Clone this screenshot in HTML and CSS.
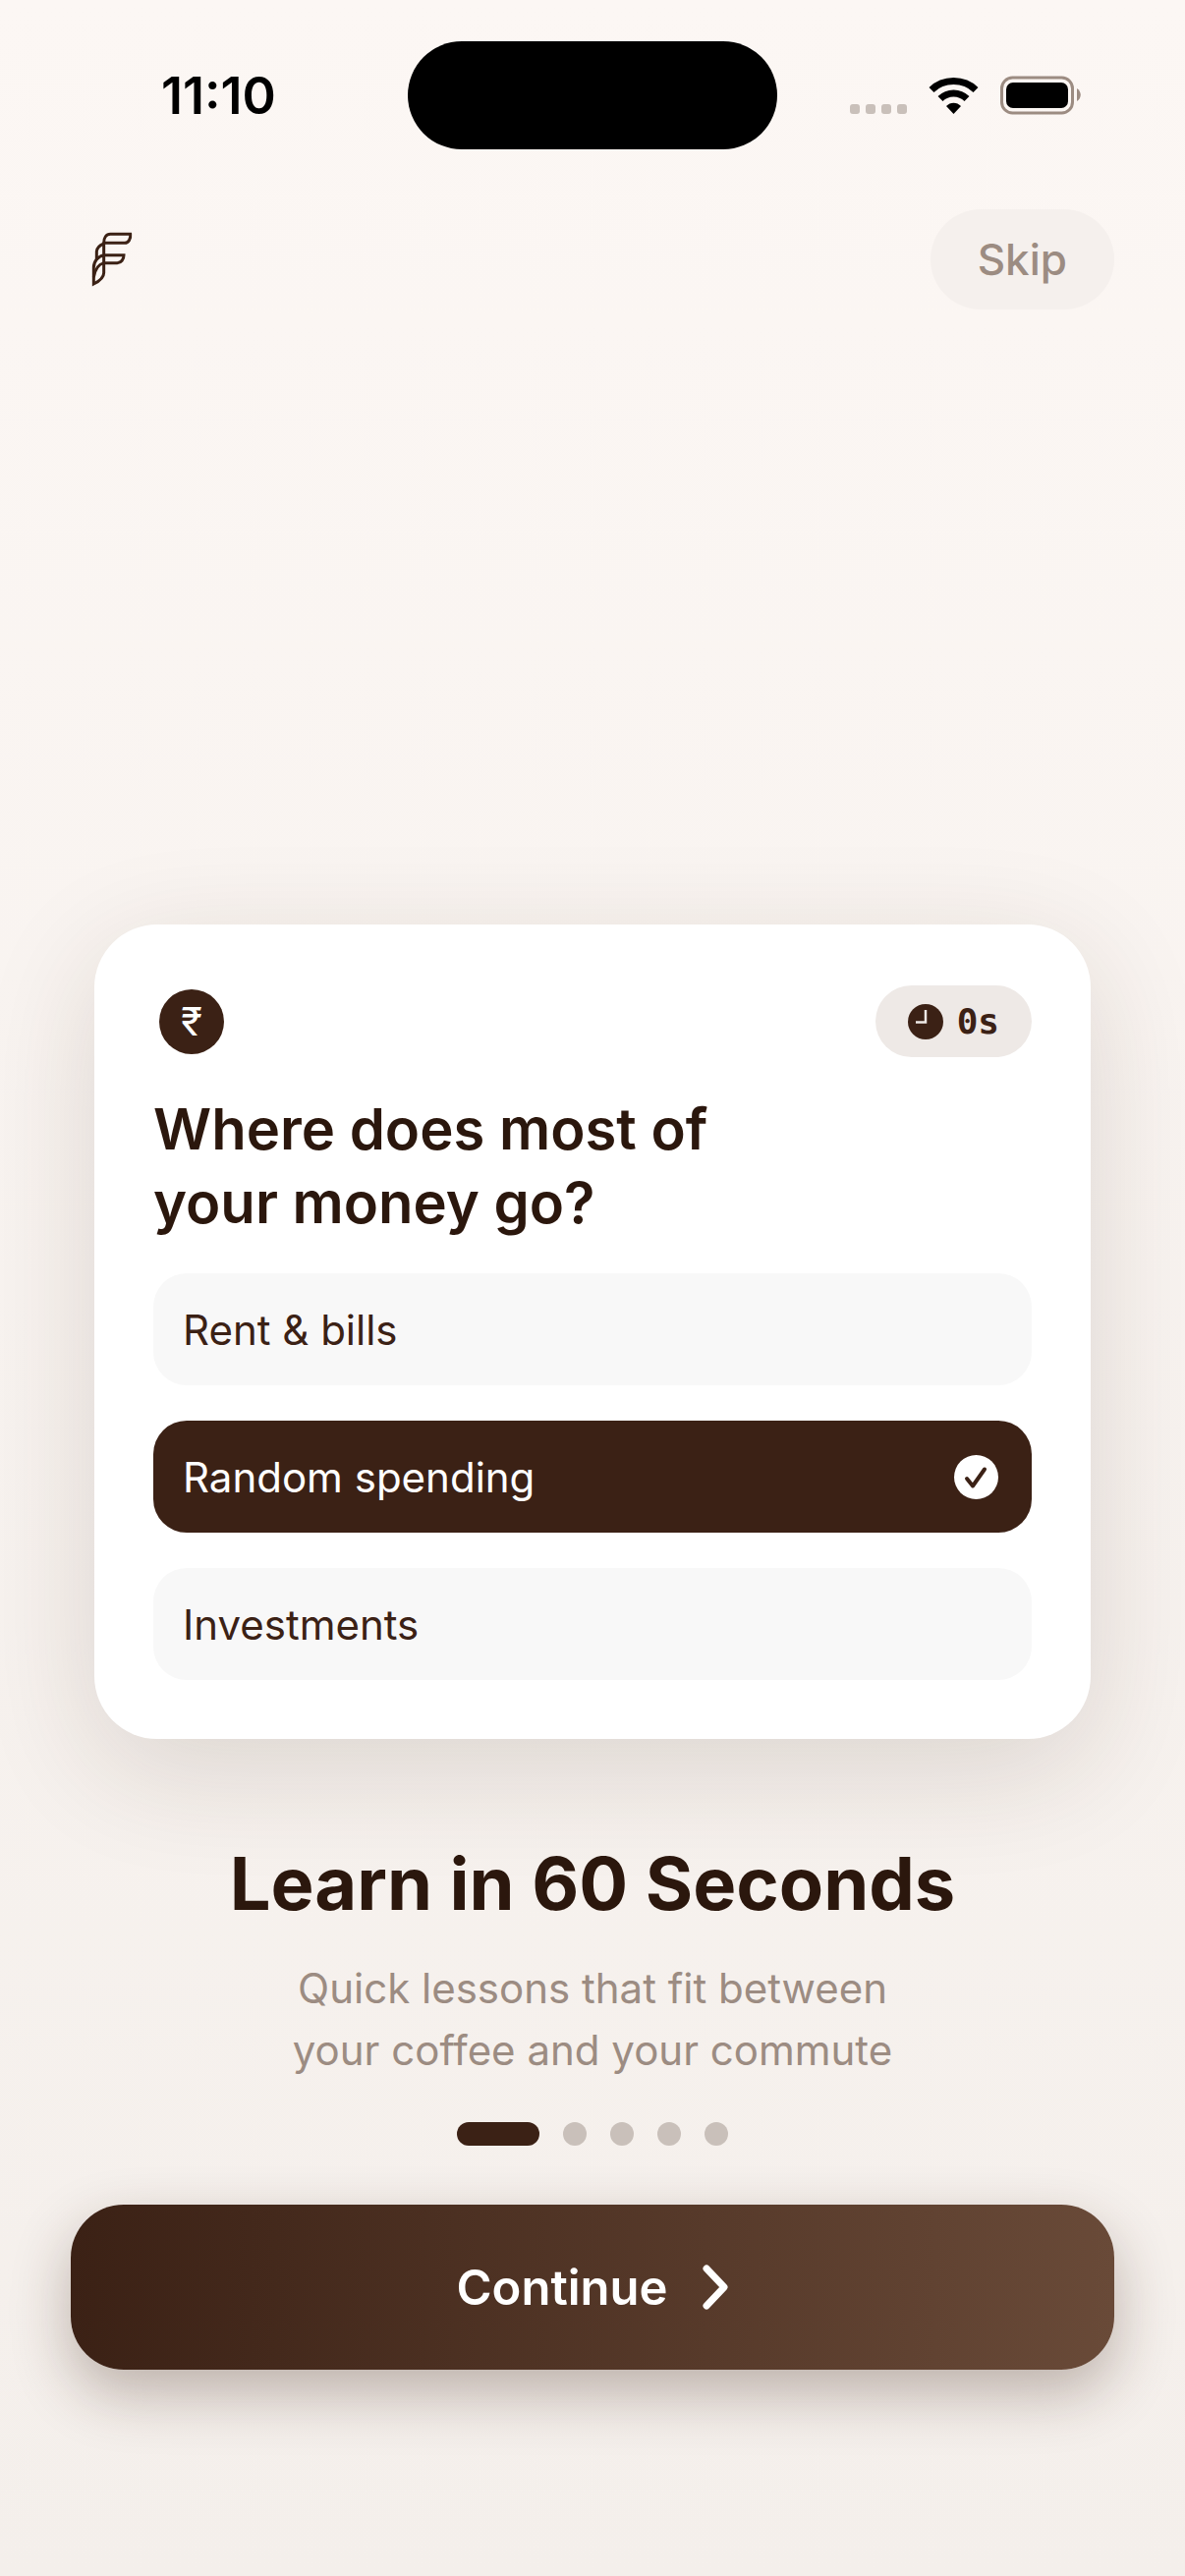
FILE: index.html
```html
<!DOCTYPE html>
<html lang="en">
<head>
    <meta charset="UTF-8">
    <meta name="viewport" content="width=device-width, initial-scale=1.0">
    <title>Learn in 60 Seconds</title>
    <link rel="stylesheet" href="styles.css">
</head>
<body>

    <div class="status-bar">
        <div class="status-time">11:10</div>
        <div class="island"></div>
        <div class="status-icons">
            <svg width="58" height="38" viewBox="0 0 58 38" fill="#c9c0ba">
                <rect x="0" y="28" width="10" height="10" rx="3"/>
                <rect x="16" y="28" width="10" height="10" rx="3"/>
                <rect x="32" y="28" width="10" height="10" rx="3"/>
                <rect x="48" y="28" width="10" height="10" rx="3"/>
            </svg>
            <svg width="51" height="38" viewBox="0 0 51 38">
                <path d="M3 13.5 C15 1.5 36 1.5 48 13.5" fill="none" stroke="#000" stroke-width="7"/>
                <path d="M12 22.5 C19.5 15 31.5 15 39 22.5" fill="none" stroke="#000" stroke-width="7"/>
                <path d="M18 30 C22 25.5 29 25.5 33 30 L25.5 38 Z"/>
            </svg>
            <svg width="82" height="40" viewBox="0 0 82 40">
                <rect x="1.5" y="2" width="72" height="36" rx="11" fill="none" stroke="#9c8c82" stroke-width="3"/>
                <rect x="6" y="7" width="63" height="26" rx="7"/>
                <path d="M78 13 C83 16 83 23 78 26 Z" fill="#9c8c82"/>
            </svg>
        </div>
    </div>

    <header class="header">
        <svg class="logo" viewBox="6 9 252 306" fill="none" stroke="#3b2115" stroke-width="9">
            <path d="M107 112 C107 97 114 85 127 85 H188 C190 99 182 112 171 112 Z"/>
            <path d="M107 149 H168 C168 162 160 173 148 173 H107"/>
            <path d="M107 110 V203 C107 217 96 227 76 237 V187 C76 168 90 152 107 149"/>
            <path d="M107 114 C92 120 85 128 85 140 V164"/>
            <path d="M76 217 C80 192 92 177 107 173"/>
        </svg>
        <button class="skip-btn" type="button">Skip</button>
    </header>

    <main class="content">
        <form class="card">
            <div class="card-top">
                <span class="coin">₹</span>
                <div class="timer">
                    <svg width="36" height="36" viewBox="0 0 36 36">
                        <circle cx="18" cy="18" r="18" fill="#3b2115"/>
                        <path d="M18 6 V18.5 H8" fill="none" stroke="#eee9e6" stroke-width="2.5"/>
                    </svg>
                    <span>0s</span>
                </div>
            </div>

            <h2 class="question">Where does most of<br>your money go?</h2>

            <div class="options">
                <label class="option">
                    <input type="radio" name="money" value="rent">
                    <span>Rent &amp; bills</span>
                </label>
                <label class="option">
                    <input type="radio" name="money" value="random" checked>
                    <span>Random spending</span>
                    <svg class="check" width="53" height="45" viewBox="0 0 53 45">
                        <circle cx="26.5" cy="22.5" r="22.5" fill="#fff"/>
                        <path d="M16 24 L22 31.5 L34 14.5" transform="translate(1 0)" fill="none" stroke="#3b2115" stroke-width="4" stroke-linecap="round" stroke-linejoin="round"/>
                    </svg>
                </label>
                <label class="option">
                    <input type="radio" name="money" value="investments">
                    <span>Investments</span>
                </label>
            </div>
        </form>

        <h1 class="title">Learn in 60 Seconds</h1>
        <p class="subtitle">Quick lessons that fit between<br>your coffee and your commute</p>
    </main>

    <footer class="footer">
        <div class="dots">
            <span class="dot active"></span>
            <span class="dot"></span>
            <span class="dot"></span>
            <span class="dot"></span>
            <span class="dot"></span>
        </div>
        <button class="continue-btn" type="button">
            Continue
            <svg width="28" height="52" viewBox="0 0 28 52" fill="none" stroke="#fff" stroke-width="7" stroke-linecap="round" stroke-linejoin="round">
                <path d="M5 7 L23 26 L5 45"/>
            </svg>
        </button>
    </footer>

</body>
</html>
```

FILE: styles.css
```css
* {
    margin: 0;
    padding: 0;
    box-sizing: border-box;
}

body {
    font-family: Inter, 'Liberation Sans', sans-serif;
    color: #3b2115;
    min-height: 100vh;
    display: flex;
    flex-direction: column;
    background: linear-gradient(#fcf7f4, #f4efeb);
}

button {
    font-family: inherit;
    border: none;
    cursor: pointer;
}

.status-bar {
    display: grid;
    grid-template-columns: 1fr auto 1fr;
    align-items: center;
    height: 177px;
    padding-top: 17px;
}

.status-time {
    padding-left: 30px;
    text-align: center;
    font-size: 52px;
    font-weight: 600;
    color: #000;
}

.island {
    width: 376px;
    height: 110px;
    border-radius: 55px;
    background-color: #000;
}

.status-icons {
    display: flex;
    justify-content: center;
    align-items: center;
    gap: 22px;
    padding-right: 32px;
}

.header {
    display: flex;
    justify-content: space-between;
    align-items: center;
    padding: 36px 72px 0;
}

.logo {
    width: 84px;
    height: 102px;
}

.skip-btn {
    height: 102px;
    padding: 0 48px;
    border-radius: 51px;
    background-color: #f5f0ed;
    color: #9c8c82;
    font-size: 44px;
    font-weight: 500;
}

.content {
    flex: 1;
    display: flex;
    flex-direction: column;
    justify-content: flex-end;
    padding: 60px 96px 0;
    text-align: center;
}

.card {
    padding: 62px 60px 60px;
    border-radius: 64px;
    background-color: #fff;
    box-shadow: 0 30px 120px rgba(59, 33, 21, 0.14);
    text-align: left;
}

.card-top {
    display: flex;
    justify-content: space-between;
    align-items: center;
    padding-left: 6px;
    margin-bottom: 36px;
}

.coin {
    width: 66px;
    height: 66px;
    border-radius: 50%;
    background-color: #3b2115;
    color: #fff;
    font-size: 40px;
    line-height: 66px;
    text-align: center;
}

.timer {
    display: flex;
    align-items: center;
    gap: 14px;
    height: 73px;
    padding: 0 33px;
    border-radius: 37px;
    background-color: #eee9e6;
    font-family: 'DejaVu Sans Mono', monospace;
    font-size: 36px;
    font-weight: 700;
}

.question {
    margin-bottom: 34px;
    font-size: 58px;
    line-height: 75px;
    font-weight: 600;
    color: #2b170d;
}

.options {
    display: flex;
    flex-direction: column;
    gap: 36px;
}

.option {
    position: relative;
    display: flex;
    justify-content: space-between;
    align-items: center;
    height: 114px;
    padding: 0 30px;
    border-radius: 34px;
    background-color: #f8f8f8;
    font-size: 42px;
    cursor: pointer;
}

.option input {
    position: absolute;
    opacity: 0;
}

.option:has(input:checked) {
    background-color: #3b2115;
    color: #fff;
}

.title {
    margin-top: 96px;
    font-size: 74px;
    line-height: 102px;
    font-weight: 700;
    color: #2b170d;
}

.subtitle {
    margin-top: 24px;
    font-size: 42px;
    line-height: 63px;
    color: #9c8c82;
}

.footer {
    padding: 42px 72px 210px;
}

.dots {
    display: flex;
    justify-content: center;
    gap: 24px;
    margin-bottom: 60px;
}

.dot {
    width: 24px;
    height: 24px;
    border-radius: 12px;
    background-color: #c9c0ba;
}

.dot.active {
    width: 84px;
    background-color: #3b2115;
}

.continue-btn {
    display: flex;
    justify-content: center;
    align-items: center;
    gap: 34px;
    width: 100%;
    height: 168px;
    border-radius: 54px;
    background: linear-gradient(to right, #3b2115, #694a38);
    box-shadow: 0 24px 60px rgba(59, 33, 21, 0.3);
    color: #fff;
    font-size: 49px;
    font-weight: 600;
}
```
